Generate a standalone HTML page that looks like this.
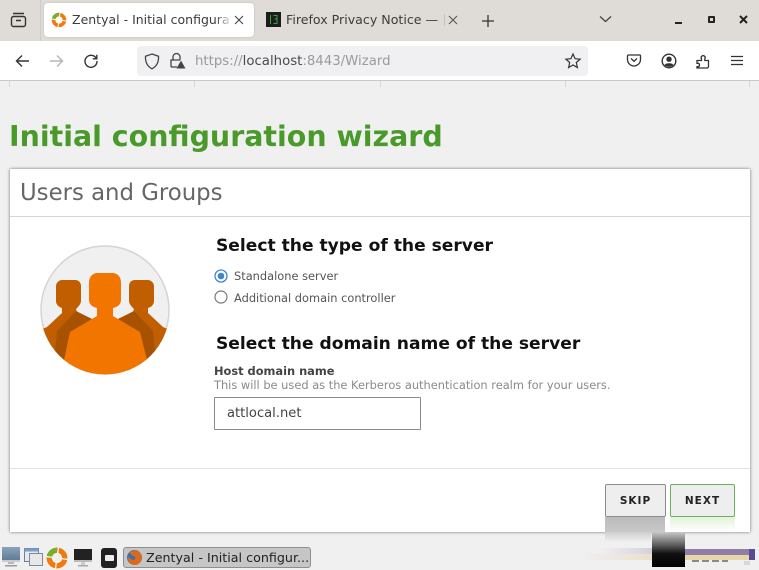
<!DOCTYPE html>
<html>
<head>
<meta charset="utf-8">
<title>Zentyal - Initial configuration wizard</title>
<style>
html,body{margin:0;padding:0}
body{width:759px;height:570px;overflow:hidden;position:relative;background:#f0f0f0;font-family:"DejaVu Sans",sans-serif}
.a{position:absolute;white-space:nowrap}
svg{position:absolute;overflow:visible}
</style>
</head>
<body>
<!-- tab bar -->
<div class="a" style="left:0;top:0;width:759px;height:41px;background:#dfdbd6"></div>
<div class="a" style="left:40px;top:0;width:1px;height:41px;background:#cfcbc6"></div>
<svg style="left:0;top:0" width="40" height="41" fill="none" stroke="#333" stroke-width="1.4">
<rect x="11.500" y="16.500" width="14" height="10" rx="2"/><path d="M13 13.500h11M16 20.500h5"/></svg>
<div class="a" style="left:44px;top:3px;width:210px;height:34px;background:#fff;border-radius:4px;box-shadow:0 0 2px rgba(0,0,0,.15)"></div>
<svg style="left:51px;top:12px" width="16" height="16" viewBox="0 0 22 22" fill="none">
<circle cx="11" cy="11" r="7.500" stroke="#f07a10" stroke-width="5"/>
<path d="M3.500 11A7.500 7.500 0 0 1 11 3.500" stroke="#78ad2e" stroke-width="5"/>
<path d="M11 0v6M0 11h6M16 11h6M11 16v6" stroke="#fff" stroke-width="1.300" transform="rotate(8 11 11)"/></svg>
<div class="a" style="left:72px;top:12px;width:159px;overflow:hidden;font-size:12.500px;line-height:16px;color:#3c3c3c">Zentyal - Initial configura</div>
<div class="a" style="left:215px;top:10px;width:16px;height:20px;background:linear-gradient(90deg,rgba(255,255,255,0),rgba(255,255,255,.9))"></div>
<svg style="left:234px;top:15px" width="10" height="10" stroke="#444" stroke-width="1.1"><path d="M1 1l8 8M9 1l-8 8"/></svg>
<div class="a" style="left:266px;top:12px;width:15px;height:15px;background:#1c1c1c"></div>
<svg style="left:266px;top:12px" width="15" height="15" fill="none" stroke="#2fa83a" stroke-width="1"><path d="M4.500 3v9M7.500 3.500h3.500v3.500h-2.500M11 7v4.500H7.500"/></svg>
<div class="a" style="left:286px;top:12px;font-size:12.600px;line-height:16px;color:#3c3c3c;width:158px;overflow:hidden">Firefox Privacy Notice —</div>
<div class="a" style="left:444px;top:14px;width:1px;height:12px;background:#c4c0bc"></div>
<svg style="left:448px;top:15px" width="10" height="10" stroke="#555" stroke-width="1.1"><path d="M1 1l8 8M9 1l-8 8"/></svg>
<svg style="left:481px;top:14px" width="14" height="14" stroke="#333" stroke-width="1.3"><path d="M7 1v12M1 7h12"/></svg>
<svg style="left:599px;top:15px" width="13" height="9" fill="none" stroke="#444" stroke-width="1.3"><path d="M1 1.500l5.500 5 5.500-5"/></svg>
<div class="a" style="left:675px;top:21.500px;width:7px;height:2px;background:#222"></div>
<div class="a" style="left:708px;top:16px;width:3px;height:3px;border:2px solid #222;border-radius:1px"></div>
<svg style="left:739px;top:15px" width="9" height="9" stroke="#222" stroke-width="2"><path d="M1 1l7 7M8 1l-7 7"/></svg>
<!-- nav bar -->
<div class="a" style="left:0;top:41px;width:759px;height:39px;background:#fff;border-bottom:1px solid #c9c9c9"></div>
<svg style="left:15px;top:54px" width="15" height="14" fill="none" stroke="#333" stroke-width="1.4"><path d="M14 7H1.500M7 1.500L1.500 7 7 12.500"/></svg>
<svg style="left:49px;top:54px" width="15" height="14" fill="none" stroke="#b5b5b5" stroke-width="1.4"><path d="M1 7h12.500M8 1.500L13.500 7 8 12.500"/></svg>
<svg style="left:83px;top:53px" width="16" height="16" fill="none" stroke="#333" stroke-width="1.4"><path d="M13.300 5.500A6 6 0 1 0 14 8"/><path d="M13.800 1.800v4h-4"/></svg>
<div class="a" style="left:137px;top:46px;width:451px;height:30px;background:#f0f0f2;border-radius:4px"></div>
<svg style="left:144px;top:53px" width="16" height="17" fill="none" stroke="#444" stroke-width="1.3"><path d="M8 1l6.500 2.200c.3 5.500-1.500 10-6.500 12.600C3 13.200 1.200 8.700 1.500 3.200z"/></svg>
<svg style="left:169px;top:52px" width="17" height="17" fill="none" stroke="#444" stroke-width="1.300"><path d="M2 15V8h9M4 8V5a3.500 3.500 0 0 1 7 0v3M2 15h6"/><path d="M12 8.500l4.500 8h-9z" fill="#444" stroke="none"/></svg>
<div class="a" style="left:195px;top:53px;font-size:13.300px;line-height:18px;color:#9a9a9a">https://<span style="color:#4a4a4a">localhost</span>:8443/Wizard</div>
<svg style="left:565px;top:53px" width="16" height="16" fill="none" stroke="#333" stroke-width="1.200"><path d="M8 1l2.100 4.700 5 .5-3.800 3.300 1.100 5L8 12l-4.400 2.500 1.100-5L.9 6.200l5-.5z"/></svg>
<svg style="left:627px;top:54px" width="14" height="13" fill="none" stroke="#333" stroke-width="1.300"><path d="M1.500 1h11a1 1 0 0 1 1 1v3.500a6.500 6.500 0 0 1-13 0V2a1 1 0 0 1 1-1z"/><path d="M4 4.500L7 7.300l3-2.800"/></svg>
<svg style="left:661px;top:53px" width="16" height="16"><circle cx="8" cy="8" r="6.800" fill="none" stroke="#333" stroke-width="1.400"/><circle cx="8" cy="6.200" r="2.700" fill="#333"/><path d="M3.500 12c1-2.300 8-2.300 9 0-2 2.500-7 2.500-9 0z" fill="#333"/></svg>
<svg style="left:696px;top:53px" width="15" height="16" fill="none" stroke="#333" stroke-width="1.300"><path d="M1 15h10a1.500 1.500 0 0 0 1.500-1.500V7.500H8.800V5.800a2 2 0 1 0-3.300 0v1.700H1v2.800h1.300a1.800 1.800 0 0 1 0 3.400H1z"/></svg>
<svg style="left:731px;top:55px" width="12" height="11" stroke="#333" stroke-width="1.200"><path d="M0 1.500h12M0 5.500h12M0 9.500h12"/></svg>
<!-- page ticks -->
<div class="a" style="left:9px;top:81px;width:1px;height:6px;background:#d8d8d8"></div>
<div class="a" style="left:194px;top:81px;width:1px;height:6px;background:#d8d8d8"></div>
<div class="a" style="left:380px;top:81px;width:1px;height:6px;background:#d8d8d8"></div>
<div class="a" style="left:565px;top:81px;width:1px;height:6px;background:#d8d8d8"></div>
<div class="a" style="left:749px;top:81px;width:1px;height:6px;background:#d8d8d8"></div>
<!-- heading -->
<div class="a" style="left:9px;top:119px;font-size:28.460px;line-height:36px;font-weight:bold;color:#4a9a2b">Initial configuration wizard</div>
<!-- card -->
<div class="a" style="left:10px;top:169px;width:740px;height:363px;background:#fff;box-shadow:0 0 3px rgba(0,0,0,.55)"></div>
<div class="a" style="left:20px;top:178px;font-size:22.800px;line-height:30px;color:#666">Users and Groups</div>
<div class="a" style="left:10px;top:216px;width:740px;height:1px;background:#d4d4d4"></div>
<!-- users icon -->
<svg style="left:40px;top:245px" width="130" height="130" viewBox="0 0 130 130">
<defs><clipPath id="c"><circle cx="65" cy="65" r="64.500"/></clipPath>
<g id="side"><path d="M22 35h13c4 0 6 3 6 6v15c0 3-3 6-5 8l1 3 15 7-22 56H0V85l7-3 15-14v-5c-4-1-6-4-6-7V41c0-3 3-6 6-6z" fill="#c15f00"/>
<path d="M36 66L52 74 30 87 24 116 15 106 17 86z" fill="#a65200"/></g></defs>
<circle cx="65" cy="65" r="64" fill="#f0f0f1" stroke="#d4d4d4" stroke-width="1.500"/>
<g clip-path="url(#c)">
<use href="#side"/>
<use href="#side" transform="matrix(-1 0 0 1 130 0)"/>
<path d="M58 28h14c6 0 9 4 9 10v17c0 4-3 7-8 8v8l5 3 22 13 7 28-8 30H32l-8-30 6-28 22-13 5-3v-8c-5-1-8-4-8-8V38c0-6 3-10 9-10z" fill="#f27500"/>
</g></svg>
<!-- form -->
<div class="a" style="left:216px;top:235px;font-size:17.100px;line-height:22px;font-weight:bold;color:#111">Select the type of the server</div>
<svg style="left:214px;top:269px" width="14" height="14"><circle cx="7" cy="7" r="6" fill="#fff" stroke="#3c86d3" stroke-width="1.300"/><circle cx="7" cy="7" r="3.300" fill="#3c86d3"/></svg>
<div class="a" style="left:234px;top:268px;font-size:11.400px;line-height:16px;color:#555">Standalone server</div>
<svg style="left:214px;top:290px" width="14" height="14"><circle cx="7" cy="7" r="6" fill="#fff" stroke="#777" stroke-width="1.200"/></svg>
<div class="a" style="left:234px;top:290px;font-size:11.400px;line-height:16px;color:#555">Additional domain controller</div>
<div class="a" style="left:216px;top:333px;font-size:17.100px;line-height:22px;font-weight:bold;color:#111">Select the domain name of the server</div>
<div class="a" style="left:214px;top:364px;font-size:11.400px;line-height:15px;font-weight:bold;color:#444">Host domain name</div>
<div class="a" style="left:214px;top:378px;font-size:11.400px;line-height:15px;color:#8a8a8a">This will be used as the Kerberos authentication realm for your users.</div>
<div class="a" style="left:214px;top:397px;width:205px;height:31px;background:#fff;border:1px solid #8a8a8a;border-radius:1px"></div>
<div class="a" style="left:227px;top:405px;font-size:13.100px;line-height:18px;color:#444">attlocal.net</div>
<!-- footer -->
<div class="a" style="left:10px;top:468px;width:740px;height:1px;background:#e2e2e2"></div>
<div class="a" style="left:605px;top:517px;width:60px;height:15px;background:linear-gradient(#bbb,#c8c8c8)"></div>
<div class="a" style="left:605px;top:532px;width:46px;height:10px;background:linear-gradient(#cfcfcf,#f0f0f0)"></div>
<div class="a" style="left:670px;top:517px;width:65px;height:15px;background:linear-gradient(#e4f2dc,#fff)"></div>
<div class="a" style="left:605px;top:484px;width:59px;height:31px;background:#eeeeef;border:1px solid #8c8c8c;border-radius:2px;text-align:center;font-size:10.500px;line-height:32px;font-weight:bold;letter-spacing:1px;color:#222">SKIP</div>
<div class="a" style="left:670px;top:484px;width:63px;height:31px;background:#eeeeef;border:1px solid #6fb05a;border-radius:2px;text-align:center;font-size:10.500px;line-height:32px;font-weight:bold;letter-spacing:1px;color:#222">NEXT</div>
<!-- taskbar -->
<svg style="left:2px;top:547px" width="19" height="21"><defs><linearGradient id="m" x1="0" y1="0" x2="0" y2="1"><stop offset="0" stop-color="#8aa3b8"/><stop offset="1" stop-color="#5f7d96"/></linearGradient></defs><rect x="0" y="0" width="18" height="13" fill="url(#m)"/><rect x="0" y="13" width="18" height="2" fill="#c8ccd0"/><rect x="6" y="15" width="6" height="2" fill="#bbb"/><rect x="3" y="18" width="12" height="1.500" fill="#999"/></svg>
<svg style="left:24px;top:548px" width="20" height="19"><rect x="0.500" y="0.500" width="14" height="13" fill="#e4eaf2" stroke="#6a7f9c"/><rect x="0.500" y="0.500" width="14" height="3" fill="#7e9cc6"/><rect x="5.500" y="5.500" width="13" height="12" fill="#e8e8e8" stroke="#7f8a96"/></svg>
<svg style="left:46px;top:547px" width="22" height="22" fill="none">
<circle cx="11" cy="11" r="7.800" stroke="#f07a10" stroke-width="5.200"/>
<path d="M3.200 11A7.800 7.800 0 0 1 11 3.200" stroke="#78ad2e" stroke-width="5.200"/>
<path d="M11 0v6M0 11h6M16 11h6M11 16v6" stroke="#fff" stroke-width="1.200" transform="rotate(8 11 11)"/></svg>
<svg style="left:74px;top:549px" width="18" height="19"><rect x="0" y="0" width="18" height="11" fill="#222"/><rect x="0" y="11" width="18" height="2" fill="#bbb"/><rect x="7" y="13" width="4" height="3" fill="#ccc"/><rect x="4" y="16" width="10" height="1.500" fill="#aaa"/></svg>
<div class="a" style="left:101px;top:548px;width:16px;height:20px;background:#222;border-radius:3px"></div>
<div class="a" style="left:105px;top:555px;width:9px;height:6px;background:#eee;border-radius:1px"></div>
<div class="a" style="left:123px;top:547px;width:186px;height:19px;background:#c6c6c6;border:1px solid #8e8e8e;border-radius:3px"></div>
<svg style="left:126px;top:549px" width="17" height="17"><circle cx="8.500" cy="8.500" r="7.500" fill="#3f70ad"/><path d="M3 4c3-3 9-4 12 1 2 4 0 10-5 11-5 .5-9-4-8-8 2 1 3 3 6 3 2-1 2-3 0-4-2 0-2-2-5-3z" fill="#dd6a18"/></svg>
<div class="a" style="left:146px;top:549px;font-size:12.700px;line-height:18px;color:#222">Zentyal - Initial configur...</div>
<!-- bottom-right artefacts -->
<div class="a" style="left:580px;top:553px;width:72px;height:7px;background:linear-gradient(90deg,#f0f0f0,#eadfcd)"></div>
<div class="a" style="left:600px;top:548px;width:52px;height:6px;background:linear-gradient(90deg,#f0f0f0,#d6d0dc)"></div>
<div class="a" style="left:652px;top:532px;width:33px;height:35px;background:linear-gradient(#c8c8c8,#555 40%,#111 62%,#000)"></div>
<div class="a" style="left:685px;top:549px;width:70px;height:6px;background:#8f7fa8"></div>
<div class="a" style="left:685px;top:555px;width:64px;height:5px;background:#e6d6a8"></div>
<div class="a" style="left:749px;top:549px;width:6px;height:11px;background:#5a4a94"></div>
<div class="a" style="left:692px;top:560px;width:36px;height:2px;background:repeating-linear-gradient(90deg,#8a8a8a 0 7px,#f0f0f0 7px 10px)"></div>
<div class="a" style="left:744px;top:561px;width:6px;height:4px;background:#d8d8d8"></div>
</body>
</html>
